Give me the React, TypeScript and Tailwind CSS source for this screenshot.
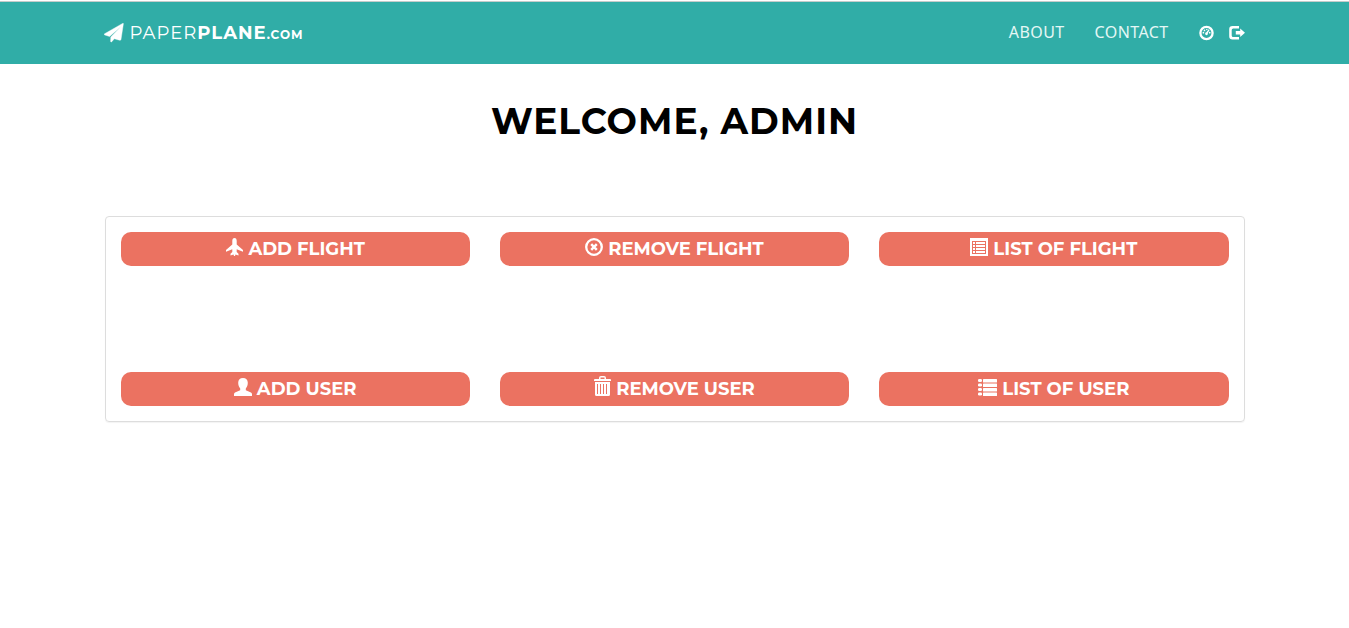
import type { ReactNode } from "react";

const iconBase = { viewBox: "0 0 18 18", fill: "currentColor", "aria-hidden": true } as const;

function SendIcon() {
  return (
    <svg {...iconBase} viewBox="0 0 20 20" className="-ml-px size-5 shrink-0">
      <path d="M19 0.200 0.200 11C0 11.500 .3 11.900 .8 12L5.600 13.500 16.800 3.800 6.800 14 6.600 18.300C6.700 19.200 7.200 19.300 7.800 18.700L10.300 15.800 15.600 17.200C16.400 17.400 16.900 17.200 17 16.500L19.400 .8C19.400 .3 19.200 .1 19 .2Z" stroke="currentColor" strokeWidth="0.400" />
    </svg>
  );
}

function DashboardIcon() {
  return (
    <svg {...iconBase} viewBox="0 0 16 16" className="size-4">
      <circle cx="7.500" cy="8" r="6.100" fill="none" stroke="currentColor" strokeWidth="2.300" />
      <circle cx="4.400" cy="7.700" r="0.850" />
      <circle cx="5.500" cy="5.400" r="0.850" />
      <circle cx="7.800" cy="4.400" r="0.750" />
      <circle cx="10.700" cy="7.700" r="0.850" />
      <path d="M9.700 4.300 10.600 4.900 8.800 8.100A1.400 1.400 0 1 1 7.400 7.300Z" />
    </svg>
  );
}

function LogOutIcon() {
  return (
    <svg {...iconBase} viewBox="0 0 16 16" className="size-4">
      <path d="M10 1.500V1H3.500A3.300 3.300 0 0 0 .2 4.300V11.200A3.300 3.300 0 0 0 3.500 14.500H10V12H4.200A1.500 1.500 0 0 1 2.700 10.500V5A1.500 1.500 0 0 1 4.200 3.500H10Z" />
      <path d="M11.200 3.500 16 7.800 11.200 12V9.600H6.800V6H11.200Z" />
    </svg>
  );
}

function PlaneIcon() {
  return (
    <svg {...iconBase} className="size-[18px] shrink-0">
      <path d="M9.500 0C11 0 11.700 1.200 11.700 2.800V6.500L18 12V13.800L11.700 11.200V14L13.500 15.800V17.500L10.500 16.500 10 18H9L8.500 16.500 5.500 17.500V15.800L7.300 14V11.200L1 13.800V12L7.300 6.500V2.800C7.300 1.200 8 0 9.500 0Z" />
    </svg>
  );
}

function RemoveIcon() {
  return (
    <svg {...iconBase} className="size-[18px] shrink-0">
      <circle cx="9" cy="9" r="7.800" fill="none" stroke="currentColor" strokeWidth="2.300" />
      <path d="M6.200 6.200 11.800 11.800M11.800 6.200 6.200 11.800" stroke="currentColor" strokeWidth="2.500" />
    </svg>
  );
}

function ListAltIcon() {
  return (
    <svg {...iconBase} className="size-[18px] shrink-0">
      <path fillRule="evenodd" d="M0 0H18V18H0ZM2 3V16H16V3Z" />
      <path d="M3 4H5V6H3ZM6 4H15V6H6ZM3 7H5V9H3ZM6 7H15V9H6ZM3 10H5V12H3ZM6 10H15V12H6ZM3 13H5V15H3ZM6 13H15V15H6Z" />
    </svg>
  );
}

function UserIcon() {
  return (
    <svg {...iconBase} className="size-[18px] shrink-0">
      <path d="M9 0C12 0 13.800 1.800 13.800 4.700C13.800 7.200 13 9 11.800 10.400V12.300L17 14.600C17.700 14.900 18 15.500 18 16.200V18H0V16.200C0 15.500.300 14.900 1 14.600L6.200 12.300V10.400C5 9 4.200 7.200 4.200 4.700C4.200 1.800 6 0 9 0Z" />
    </svg>
  );
}

function TrashIcon() {
  return (
    <svg {...iconBase} viewBox="0 0 17 20" className="h-5 w-[17px] shrink-0">
      <path fillRule="evenodd" d="M5 3V2Q5 0 7 0H10Q12 0 12 2V3H16Q17 3 17 4V5H0V4Q0 3 1 3ZM6.500 3H10.500V1.500H6.500Z" />
      <path fillRule="evenodd" d="M1 6H16V18.500Q16 20 14.500 20H2.500Q1 20 1 18.500ZM3 8V18H4V8ZM6 8V18H7V8ZM9 8V18H10V8ZM12 8V18H13V8Z" />
    </svg>
  );
}

function ListIcon() {
  return (
    <svg {...iconBase} viewBox="0 0 19 18" className="h-[18px] w-[19px] shrink-0">
      {[1, 5.500, 10, 14.500].map((y) => (
        <g key={y}>
          <rect x="0" y={y} width="4" height="3" rx="1.200" />
          <rect x="5" y={y} width="14" height="3.500" rx="0.500" />
        </g>
      ))}
    </svg>
  );
}

const actions: { label: string; icon: ReactNode }[] = [
  { label: "ADD FLIGHT", icon: <PlaneIcon /> },
  { label: "REMOVE FLIGHT", icon: <RemoveIcon /> },
  { label: "LIST OF FLIGHT", icon: <ListAltIcon /> },
  { label: "ADD USER", icon: <UserIcon /> },
  { label: "REMOVE USER", icon: <TrashIcon /> },
  { label: "LIST OF USER", icon: <ListIcon /> },
];

export default function App() {
  return (
    <div className="min-h-screen bg-white pt-px font-['Montserrat','Inter',sans-serif] text-black">
      <header className="border-t border-[#c4cccb] bg-[#30ada7] text-white">
        <div className="mx-auto flex h-[62px] max-w-[1170px] items-center justify-between px-[15px]">
          <a href="#home" className="flex items-center gap-1.5 text-lg tracking-[1px]">
            <SendIcon />
            <span>
              PAPER<b className="font-bold">PLANE<span className="text-xs">.COM</span></b>
            </span>
          </a>
          <nav className="flex items-center gap-[30px] font-['Noto_Sans',sans-serif] text-base tracking-wide text-[#e4f7f5]">
            <a href="#about" className="pb-0.5">ABOUT</a>
            <a href="#contact" className="pb-0.5">CONTACT</a>
            <div className="flex gap-3.5 text-white">
              <a href="#dashboard" aria-label="Dashboard"><DashboardIcon /></a>
              <a href="#logout" aria-label="Log out"><LogOutIcon /></a>
            </div>
          </nav>
        </div>
      </header>
      <main className="mx-auto max-w-[1170px] px-[15px]">
        <h1 className="pt-[37px] text-center text-4xl font-bold tracking-[1px]">WELCOME, ADMIN</h1>
        <section className="mt-[75px] grid grid-cols-3 gap-x-[30px] gap-y-[106px] rounded border border-[#dddddd] p-[15px] shadow-[0_1px_1px_rgba(0,0,0,0.05)]">
          {actions.map(({ label, icon }) => (
            <button key={label} type="button" className="flex h-[34px] cursor-pointer items-center justify-center gap-[5px] rounded-[10px] bg-[#eb7261] text-lg font-bold text-white">
              <span className="mb-1.5 flex h-5 items-end">{icon}</span>
              {label}
            </button>
          ))}
        </section>
      </main>
    </div>
  );
}
